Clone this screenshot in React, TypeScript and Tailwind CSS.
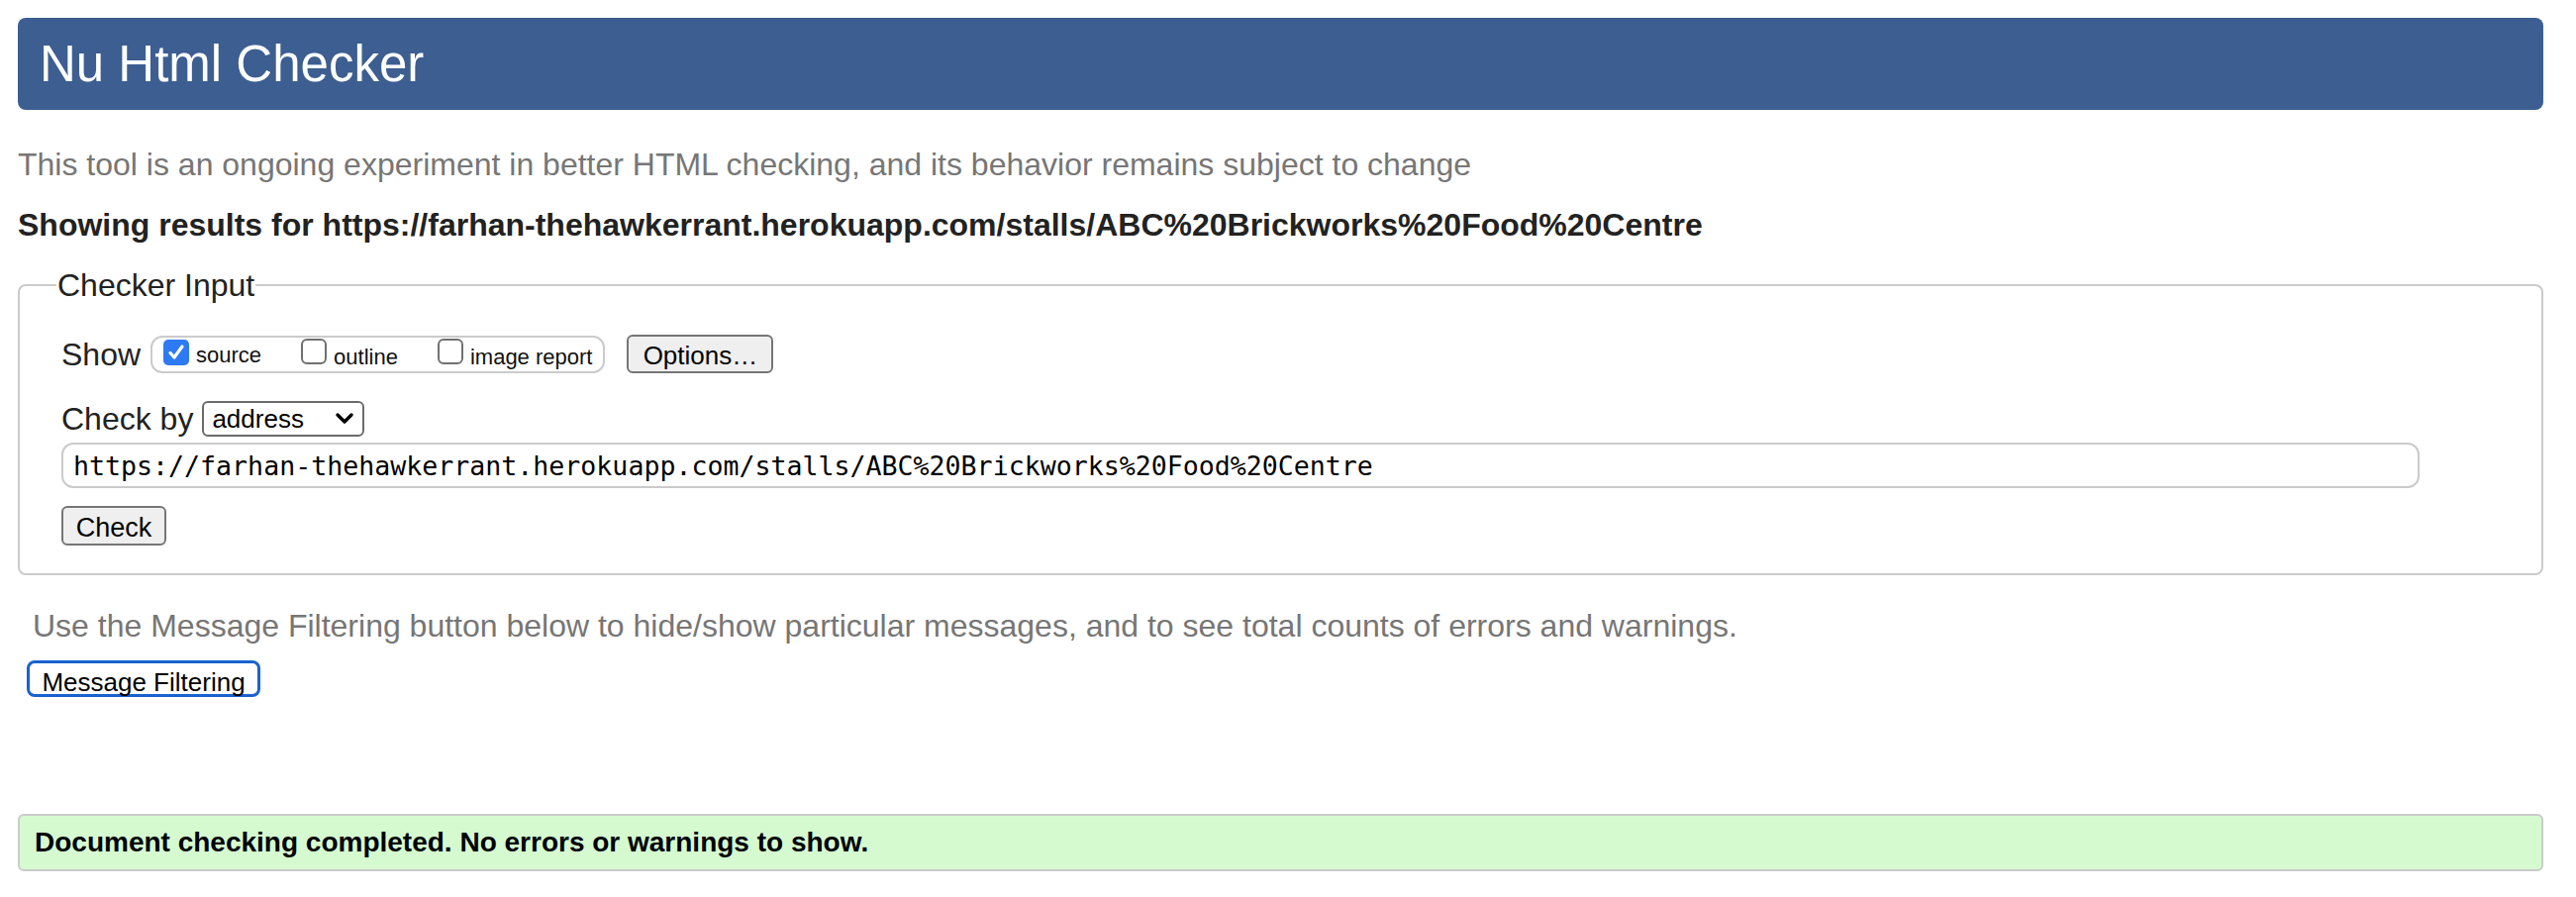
import React from "react";

const url =
  "https://farhan-thehawkerrant.herokuapp.com/stalls/ABC%20Brickworks%20Food%20Centre";

const Box = ({ checked }: { checked?: boolean }) => {
  if (checked) {
    return (
      <span className="flex h-[26px] w-[26px] shrink-0 items-center justify-center rounded-[5px] bg-[#2d7bf4]">
        <svg width="20" height="20" viewBox="0 0 20 20">
          <path
            d="M4 10.5 L8 15 L16 4"
            fill="none"
            stroke="white"
            strokeWidth="3.2"
            strokeLinecap="round"
            strokeLinejoin="round"
          />
        </svg>
      </span>
    );
  }
  return (
    <span className="block h-[26px] w-[26px] shrink-0 rounded-[6px] border-2 border-[#707070] bg-white" />
  );
};

const Opt = ({ label, checked }: { label: string; checked?: boolean }) => (
  <label className="flex items-baseline gap-[7px]">
    <Box checked={checked} />
    <span className="text-[22px] leading-[26px] text-[#111]">{label}</span>
  </label>
);

export default function App() {
  return (
    <div className="min-h-screen bg-white pl-[18px] pr-[33px] pt-[18px] font-['Liberation_Sans',Arial,sans-serif] text-[#222]">
      <div className="h-[93px] rounded-[8px] bg-[#3c5e91] pl-[22px] text-[51px] leading-[93px] text-white">
        Nu Html Checker
      </div>

      <p className="mt-[37px] text-[32px] leading-[36px] text-[#767676]">
        This tool is an ongoing experiment in better HTML checking, and its
        behavior remains subject to change
      </p>
      <p className="mt-[25px] text-[32px] font-bold leading-[36px] text-[#222]">
        Showing results for {url}
      </p>

      <fieldset className="mt-[25px] rounded-[8px] border-2 border-[#cbcbcb] pb-[28px] pl-[42px] pt-[32px]">
        <legend className="-ml-[5px] px-[1px] text-[32px] leading-[36px] text-[#222]">
          Checker Input
        </legend>

        <div className="flex h-[39px] items-center">
          <span className="mr-[10px] text-[32px] leading-[36px]">Show</span>
          <div className="flex h-[38px] items-center gap-[40px] rounded-[12px] border-2 border-[#cbcbcb] px-[11px]">
            <Opt label="source" checked />
            <Opt label="outline" />
            <Opt label="image report" />
          </div>
          <button className="ml-[22px] h-[39px] w-[148px] rounded-[6px] border-2 border-[#767676] bg-[#efefef] text-[26px] text-black">
            Options…
          </button>
        </div>

        <div className="mt-[28px] flex h-[36px] items-center">
          <span className="mr-[9px] text-[32px] leading-[36px]">Check by</span>
          <div className="flex h-[36px] w-[164px] items-center justify-between rounded-[6px] border-2 border-[#6b6b6b] bg-white pl-[8px] pr-[8px]">
            <span className="text-[26px] text-black">address</span>
            <svg width="20" height="14" viewBox="0 0 20 14">
              <path
                d="M3 3 L10 10 L17 3"
                fill="none"
                stroke="black"
                strokeWidth="3.4"
                strokeLinecap="round"
                strokeLinejoin="round"
              />
            </svg>
          </div>
        </div>

        <input
          readOnly
          value={url}
          className="mt-[6px] block h-[46px] w-[2382px] rounded-[12px] border-2 border-[#cbcbcb] bg-white px-[10px] font-['DejaVu_Sans_Mono',monospace] text-[26.6px] text-black outline-none"
        />

        <button className="mt-[18px] block h-[40px] w-[106px] rounded-[6px] border-2 border-[#767676] bg-[#efefef] text-[27px] text-black">
          Check
        </button>
      </fieldset>

      <p className="ml-[15px] mt-[33px] text-[32px] leading-[36px] text-[#767676]">
        Use the Message Filtering button below to hide/show particular
        messages, and to see total counts of errors and warnings.
      </p>
      <button className="ml-[9px] mt-[17px] block h-[37px] w-[236px] rounded-[8px] border-[3px] border-[#1a62d0] bg-white text-[26px] text-black">
        Message Filtering
      </button>

      <div className="mt-[118px] flex h-[58px] items-center rounded-[6px] border-2 border-[#cbcbcb] bg-[#d5fad0] pl-[15px] text-[28px] font-bold text-black">
        Document checking completed. No errors or warnings to show.
      </div>
    </div>
  );
}
